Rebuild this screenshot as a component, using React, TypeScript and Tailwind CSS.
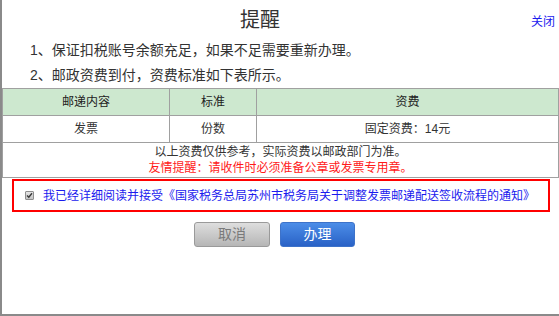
const font = "font-['Liberation_Sans','Noto_Sans_CJK_SC',sans-serif]";

function Checkmark() {
  return (
    <span className="flex items-center justify-center w-[9px] h-[9px] border border-[#8f8f8f] bg-gradient-to-b from-[#e6e6e6] to-[#c4c4c4] rounded-[1px]">
      <svg width="7" height="7" viewBox="0 0 7 7">
        <path d="M1 3.6 L2.8 5.3 L6 1.3" fill="none" stroke="#3a3a3a" strokeWidth="1.4" />
      </svg>
    </span>
  );
}

export default function App() {
  return (
    <div className={`${font} w-[559px] h-[316px] bg-white border-l-2 border-b-2 border-[#8a8a8a] text-[#333] overflow-hidden`}>
      {/* title bar */}
      <div className="flex h-[38px]">
        <div className="flex-1 text-center text-[20px] leading-[24px] pt-[8px]">提醒</div>
        <a className="w-[41px] text-right pr-[4px] pt-[14px] text-[12px] leading-[16px] text-[#1a1aee] cursor-pointer">关闭</a>
      </div>

      <div className="pl-[28px] text-[14px] leading-[25px]">
        <p>1、保证扣税账号余额充足，如果不足需要重新办理。</p>
        <p>2、邮政资费到付，资费标准如下表所示。</p>
      </div>

      {/* fee table */}
      <div className="border border-[#a0a0a0] text-[12px]">
        <div className="flex h-[27px] border-b border-[#a0a0a0] bg-[#cde8cf] text-[#222]">
          <div className="w-[167px] border-r border-[#a0a0a0] flex items-center justify-center">邮递内容</div>
          <div className="w-[87px] border-r border-[#a0a0a0] flex items-center justify-center">标准</div>
          <div className="flex-1 flex items-center justify-center">资费</div>
        </div>
        <div className="flex h-[27px] border-b border-[#a0a0a0]">
          <div className="w-[167px] border-r border-[#a0a0a0] flex items-center justify-center">发票</div>
          <div className="w-[87px] border-r border-[#a0a0a0] flex items-center justify-center">份数</div>
          <div className="flex-1 flex items-center justify-center">固定资费：14元</div>
        </div>
        <div className="h-[34px] pt-[1px] text-center leading-[16px]">
          <p>以上资费仅供参考，实际资费以邮政部门为准。</p>
          <p className="text-[#ff1a1a]">友情提醒：请收件时必须准备公章或发票专用章。</p>
        </div>
      </div>

      {/* agreement */}
      <div className="ml-[10px] mt-[1px] w-[538px] h-[33px] border-2 border-[#ff0000] flex items-center pl-[11px]">
        <Checkmark />
        <span className="ml-[9px] text-[12px] text-[#1a1aee]">
          我已经详细阅读并接受《国家税务总局苏州市税务局关于调整发票邮递配送签收流程的通知》
        </span>
      </div>

      {/* actions */}
      <div className="flex gap-[10px] pl-[192px] mt-[10px]">
        <button className="w-[76px] h-[25px] rounded-[3px] border border-[#9a9a9a] bg-gradient-to-b from-[#dedede] to-[#b6b6b6] text-[14px] text-[#7a7a7a]">
          取消
        </button>
        <button className="w-[75px] h-[25px] rounded-[3px] border border-[#3d72c9] bg-gradient-to-b from-[#4c8de8] to-[#2a62c6] text-[14px] text-white">
          办理
        </button>
      </div>
    </div>
  );
}
